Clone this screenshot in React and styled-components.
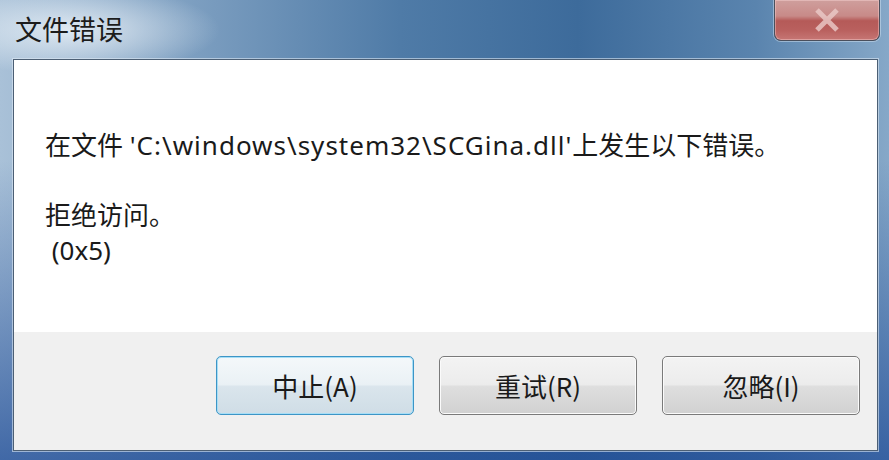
import React from "react";
import styled, { createGlobalStyle } from "styled-components";

const GlobalStyle = createGlobalStyle`
  html, body {
    margin: 0;
    padding: 0;
    overflow: hidden;
  }
  body {
    font-family: "Noto Sans", "Noto Sans CJK SC", sans-serif;
  }
`;

const Window = styled.div`
  width: 889px;
  height: 460px;
  display: flex;
  flex-direction: column;
  box-sizing: border-box;
  background:
    radial-gradient(ellipse 150px 45px at 70px 30px, rgba(235, 242, 248, 0.85), rgba(235, 242, 248, 0) 100%),
    linear-gradient(180deg, rgba(30, 70, 140, 0) 0%, rgba(30, 70, 140, 0) 35%, rgba(30, 75, 150, 0.75) 100%),
    linear-gradient(90deg, #a9c1d8 0%, #7c9ec0 22%, #4f7ba7 45%, #3d6b9b 65%, #5a84ae 85%, #86a8c8 100%);
`;

const TitleBar = styled.div`
  height: 59px;
  flex-shrink: 0;
  display: flex;
  align-items: flex-start;
`;

const Title = styled.div`
  margin: 13px 0 0 15px;
  font-family: "Noto Sans CJK SC", sans-serif;
  font-size: 27px;
  line-height: 32px;
  color: #1c1c1c;
`;

const CloseButton = styled.div`
  margin-left: auto;
  margin-right: 9px;
  width: 106px;
  height: 41px;
  box-sizing: border-box;
  border: 1px solid #4a4f5c;
  border-top: none;
  border-radius: 0 0 7px 7px;
  box-shadow: inset 0 0 0 1px rgba(255, 220, 220, 0.4), 0 0 0 1px rgba(210, 225, 240, 0.5);
  background: linear-gradient(
    180deg,
    #cf9f9d 0%,
    #c88a88 40%,
    #b55a58 52%,
    #b9605e 75%,
    #c67674 100%
  );
  display: flex;
  align-items: center;
  justify-content: center;
`;

const Client = styled.div`
  flex: 1;
  margin: 0 11px 9px 13px;
  border: 1px solid #4c5f74;
  display: flex;
  flex-direction: column;
  box-shadow: 0 0 0 1px rgba(220, 232, 244, 0.6);
`;

const MessageArea = styled.div`
  flex: 1;
  background: #ffffff;
  padding: 68px 0 0 31px;
  font-size: 26px;
  line-height: 35px;
  color: #1a1a1a;
`;

const Line = styled.div`
  white-space: pre;
  min-height: 35px;
`;

const FilePath = styled.span`
  letter-spacing: 1px;
`;

const ButtonBar = styled.div`
  height: 118px;
  flex-shrink: 0;
  background: #f0f0f0;
  display: flex;
  justify-content: flex-end;
  align-items: flex-start;
  gap: 25px;
  padding: 24px 17px 0 0;
  box-sizing: border-box;
`;

const Button = styled.div`
  width: 198px;
  height: 59px;
  box-sizing: border-box;
  border: 1px solid ${(p) => (p.$default ? "#3d95c6" : "#7a7a7a")};
  border-radius: 5px;
  box-shadow: inset 0 0 0 1px ${(p) => (p.$default ? "#a7def6" : "#fbfbfb")};
  background: ${(p) =>
    p.$default
      ? "linear-gradient(180deg, #f4f8fa 0%, #eaf1f5 48%, #dae5ec 52%, #cfdde6 100%)"
      : "linear-gradient(180deg, #f3f3f3 0%, #ececec 48%, #dedede 52%, #d1d1d1 100%)"};
  display: flex;
  align-items: center;
  justify-content: center;
  font-family: "Noto Sans CJK SC", sans-serif;
  font-size: 26px;
  color: #1a1a1a;
`;

const CloseIcon = () => (
  <svg width="30" height="24" viewBox="0 0 30 24">
    <path
      d="M5 2 L25 22 M25 2 L5 22"
      stroke="#ecccca"
      strokeWidth="5"
      strokeLinecap="butt"
      opacity="0.8"
    />
  </svg>
);

export default function App() {
  return (
    <>
      <GlobalStyle />
      <Window>
        <TitleBar>
          <Title>文件错误</Title>
          <CloseButton>
            <CloseIcon />
          </CloseButton>
        </TitleBar>
        <Client>
          <MessageArea>
            <Line>
              在文件 <FilePath>'C:\windows\system32\SCGina.dll'</FilePath>上发生以下错误。
            </Line>
            <Line> </Line>
            <Line>拒绝访问。</Line>
            <Line> (0x5)</Line>
          </MessageArea>
          <ButtonBar>
            <Button $default>中止(A)</Button>
            <Button>重试(R)</Button>
            <Button>忽略(I)</Button>
          </ButtonBar>
        </Client>
      </Window>
    </>
  );
}
